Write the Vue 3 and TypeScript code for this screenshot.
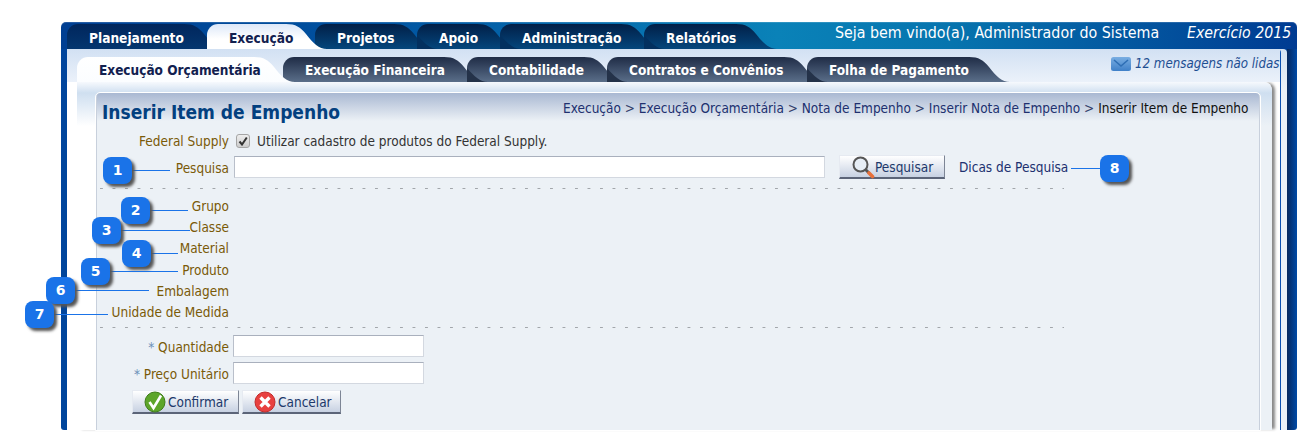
<script setup lang="ts">
interface Tab { label: string; width: number; gap: number; active?: boolean }
interface Callout { n: number; x: number; y: number; from: number; to: number; line: number }

const mainTabs: Tab[] = [
  { label: 'Planejamento', width: 118, gap: 22 },
  { label: 'Execução', width: 80, gap: 28, active: true },
  { label: 'Projetos', width: 80, gap: 22 },
  { label: 'Apoio', width: 61, gap: 22 },
  { label: 'Administração', width: 122, gap: 22 },
  { label: 'Relatórios', width: 93, gap: 22 }
]
const subTabs: Tab[] = [
  { label: 'Execução Orçamentária', width: 178, gap: 28, active: true },
  { label: 'Execução Financeira', width: 162, gap: 22 },
  { label: 'Contabilidade', width: 118, gap: 22 },
  { label: 'Contratos e Convênios', width: 178, gap: 22 },
  { label: 'Folha de Pagamento', width: 163, gap: 22 }
]
const crumbs = ['Execução', 'Execução Orçamentária', 'Nota de Empenho', 'Inserir Nota de Empenho']
const plainLabels = ['Grupo', 'Classe', 'Material', 'Produto', 'Embalagem', 'Unidade de Medida']
const callouts: Callout[] = [
  { n: 1, x: 103, y: 157, from: 132, to: 170, line: 170 },
  { n: 2, x: 121, y: 197, from: 150, to: 188, line: 210 },
  { n: 3, x: 92, y: 217, from: 121, to: 190, line: 230 },
  { n: 4, x: 122, y: 240, from: 150, to: 178, line: 253 },
  { n: 5, x: 81, y: 258, from: 110, to: 178, line: 271 },
  { n: 6, x: 46, y: 277, from: 75, to: 149, line: 290 },
  { n: 7, x: 25, y: 301, from: 53, to: 108, line: 314 },
  { n: 8, x: 1100, y: 155, from: 1071, to: 1100, line: 168 }
]
</script>

<template>
  <div class="page">
    <div class="frame">
      <header class="top">
        <nav class="tabs main">
          <div
            v-for="t in mainTabs"
            :key="t.label"
            class="tab"
            :class="{ active: t.active }"
            :style="{ width: t.width + 'px', marginRight: t.gap + 'px' }"
          >{{ t.label }}</div>
        </nav>
        <div class="welcome">Seja bem vindo(a), Administrador do Sistema</div>
        <div class="year">Exercício 2015</div>
      </header>
      <div class="shell">
        <div class="inner">
          <div class="subrow">
            <nav class="tabs sub">
              <div
                v-for="t in subTabs"
                :key="t.label"
                class="tab"
                :class="{ active: t.active }"
                :style="{ width: t.width + 'px', marginRight: t.gap + 'px' }"
              >{{ t.label }}</div>
            </nav>
            <div class="msgs">
              <svg class="env" width="20" height="14" viewBox="0 0 20 14">
                <defs>
                  <linearGradient id="envfill" x1="0" y1="0" x2="0" y2="1">
                    <stop offset="0" stop-color="#7aaee2" />
                    <stop offset="1" stop-color="#3f80c8" />
                  </linearGradient>
                </defs>
                <rect width="20" height="14" rx="2.5" fill="url(#envfill)" />
                <path d="M3 3 L10 9 L17 3" fill="none" stroke="#2f6fb5" stroke-width="1.6" />
              </svg>
              <span>12 mensagens não lidas</span>
            </div>
          </div>
          <div class="panel">
            <main class="box">
              <div class="titlebar">
                <h1>Inserir Item de Empenho</h1>
                <div class="crumbs">
                  <template v-for="c in crumbs" :key="c"><a>{{ c }}</a> &gt; </template>
                  <span class="cur">Inserir Item de Empenho</span>
                </div>
              </div>

              <div class="row fed">
                <label>Federal Supply</label>
                <div class="check">
                  <span class="cb">
                    <svg width="10" height="10" viewBox="0 0 10 10"><path d="M1.5 5.5 L4 8.5 L8.8 1.5" fill="none" stroke="#333" stroke-width="2" /></svg>
                  </span>
                  <span>Utilizar cadastro de produtos do Federal Supply.</span>
                </div>
              </div>

              <div class="row search">
                <label>Pesquisa</label>
                <div class="searchline">
                  <input class="inp wide" type="text" />
                  <button class="btn pesq">
                    <svg width="24" height="24" viewBox="0 0 24 24">
                      <line x1="14" y1="14" x2="18" y2="18" stroke="#555" stroke-width="3" />
                      <line x1="18" y1="18" x2="21.5" y2="21.5" stroke="#e8703a" stroke-width="3.6" stroke-linecap="round" />
                      <circle cx="9.5" cy="9.5" r="7" fill="#e6edf5" stroke="#555" stroke-width="2" />
                    </svg>
                    Pesquisar
                  </button>
                  <a class="tips">Dicas de Pesquisa</a>
                </div>
              </div>

              <div class="dots first"></div>

              <div class="plain">
                <div v-for="l in plainLabels" :key="l" class="row tight"><label>{{ l }}</label></div>
              </div>

              <div class="dots second"></div>

              <div class="row field">
                <label><em>*</em> Quantidade</label>
                <input class="inp short" type="text" />
              </div>
              <div class="row field gap">
                <label><em>*</em> Preço Unitário</label>
                <input class="inp short" type="text" />
              </div>

              <div class="actions">
                <button class="btn ok">
                  <svg width="22" height="22" viewBox="0 0 22 22">
                    <circle cx="11" cy="11" r="10" fill="#5da52a" stroke="#3f7d1a" />
                    <path d="M5.5 11 L9.5 17 L17 4.5" fill="none" stroke="#fff" stroke-width="2.6" />
                  </svg>
                  Confirmar
                </button>
                <button class="btn no">
                  <svg width="22" height="22" viewBox="0 0 22 22">
                    <circle cx="11" cy="11" r="10" fill="#e8403f" stroke="#c22b2b" />
                    <path d="M6.5 6.5 L15.5 15.5 M15.5 6.5 L6.5 15.5" stroke="#fff" stroke-width="3.4" />
                  </svg>
                  Cancelar
                </button>
              </div>
            </main>
          </div>
        </div>
      </div>
    </div>

    <template v-for="c in callouts" :key="c.n">
      <div class="cline" :style="{ left: c.from + 'px', top: c.line + 'px', width: c.to - c.from + 'px' }"></div>
      <div class="badge" :style="{ left: c.x + 'px', top: c.y + 'px' }">{{ c.n }}</div>
    </template>
  </div>
</template>

<style scoped>
.page {
  position: relative;
  width: 1311px;
  height: 440px;
  overflow: hidden;
  background: #fff;
  padding: 22px 0 0 61px;
  box-sizing: border-box;
  font-family: "DejaVu Sans", "Noto Sans", sans-serif;
  font-stretch: condensed;
  font-size: 13.5px;
}
.frame {
  width: 1236px;
  height: 408px;
  display: flex;
  flex-direction: column;
  border-radius: 5px 5px 3px 3px;
  background:
    linear-gradient(to right, #003f92 0, #0052a0 25%, #0a82b8 58%, #0674ae 72%, #003b92 100%) top / 100% 27px no-repeat,
    linear-gradient(to right, #00459c 0, #00459c 1226px, #06285e 1226px, #004aa6 1236px);
}
.top {
  height: 27px;
  flex: none;
  display: flex;
  padding-left: 6px;
  color: #fff;
  position: relative;
  box-shadow: inset 0 1px rgba(255, 255, 255, 0.15);
  border-radius: 5px 5px 0 0;
}
.tabs { display: flex; }
.main { padding-top: 2px; }
.tab {
  position: relative;
  z-index: 0;
  flex: none;
  box-sizing: border-box;
  font-weight: bold;
  color: #fff;
  border-top-left-radius: 11px;
  white-space: nowrap;
  padding-left: 22px;
  height: 25px;
}
.tab::after {
  content: "";
  position: absolute;
  z-index: -1;
  top: 0;
  left: 100%;
  width: 41px;
  height: 25px;
  margin-left: -1px;
  background: inherit;
  clip-path: path("M0 0 C 10 0 14 3 20 10 C 27 19 33 25 41 25 L0 25 Z");
}
.tab::before {
  content: "";
  position: absolute;
  z-index: -1;
  top: 0;
  left: 0;
  width: 22px;
  height: 25px;
  clip-path: path("M0 11 C 7 19 13 25 21 25 L0 25 Z");
}
.main .tab {
  font-size: 13.6px;
  line-height: 28px;
  background: linear-gradient(#021f47, #04467c);
}
.main .tab::before { background: #03305f; }
.sub .tab::before { background: #243249; }
.tab:first-child::before,
.tab.active::before,
.tab.active + .tab::before { display: none; }
.main .tab:first-child { background: linear-gradient(#01265c, #04366f); }
.main .tab.active {
  color: #11204f;
  background: linear-gradient(#dde8f8, #fff 60%);
  z-index: 3;
}
.welcome {
  position: absolute;
  left: 774px;
  top: 0;
  line-height: 22px;
  font-size: 15.85px;
  white-space: nowrap;
}
.year {
  position: absolute;
  left: 1126px;
  top: 0;
  line-height: 22px;
  font-size: 15.7px;
  font-style: italic;
  white-space: nowrap;
}
.shell {
  margin: 0 10px 0 6px;
  height: 381px;
  padding-right: 6px;
  background: linear-gradient(#d6e3f3, #eaf0f7 40px);
  border-top-right-radius: 4px;
}
.inner {
  height: 381px;
  box-sizing: border-box;
  border-right: 1.5px solid #0a4fb0;
  background: #fff;
  display: flex;
  flex-direction: column;
  border-top-right-radius: 4px;
}
.subrow {
  height: 33px;
  flex: none;
  padding: 8px 0 0 10px;
  box-sizing: border-box;
  background: linear-gradient(#d2e1f3, #ebf1fa);
  display: flex;
  position: relative;
}
.sub .tab {
  font-size: 13.5px;
  line-height: 26px;
  background: linear-gradient(#1f2c46, #5a6e89);
}
.sub .tab.active {
  color: #11204f;
  background: linear-gradient(#fff, #fbfdff);
  z-index: 3;
}
.msgs {
  position: absolute;
  left: 1044px;
  top: 7px;
  width: 169px;
  overflow: hidden;
  display: flex;
  align-items: center;
  gap: 4px;
  color: #1d4e92;
  font-style: italic;
  font-size: 13.2px;
  white-space: nowrap;
  line-height: 16px;
}
.env { flex: none; }
.panel {
  flex: 1;
  margin: 0 8.5px 0 10px;
  padding: 11px 12px 0 19px;
  background:
    linear-gradient(#f6f9fd, #cfdff0 11px, rgba(207, 223, 240, 0) 44px),
    linear-gradient(to right, #fff 19px, #ecf1f6 19px);
  border-top-right-radius: 8px;
  box-shadow: 4px 0 3px -1px #888;
  display: flex;
}
.box {
  flex: 1;
  border-left: 1px solid #c8d0dc;
  border-right: 1px solid #c8d0dc;
  outline: 1px solid #fff;
  border-radius: 4px 4px 0 0;
  background: linear-gradient(#a9b8d2, #ecf1f6 28px);
  color: #7a5a08;
}
.titlebar {
  height: 36px;
  position: relative;
}
h1 {
  position: absolute;
  left: 5px;
  top: 7px;
  margin: 0;
  font-size: 19px;
  line-height: 24px;
  font-weight: bold;
  color: #03407f;
  white-space: nowrap;
}
.crumbs {
  position: absolute;
  right: 10px;
  top: 5px;
  line-height: 20px;
  color: #33416b;
  white-space: nowrap;
}
.crumbs a { color: #20306f; }
.cur { color: #111; }
.row {
  display: grid;
  grid-template-columns: 132px 1fr;
  column-gap: 4px;
  align-items: center;
}
.row label { text-align: right; white-space: nowrap; }
.row em { font-style: normal; color: #6b8fb8; }
.fed { height: 24px; }
.check { display: flex; align-items: center; gap: 7px; padding-left: 3px; color: #333; }
.cb {
  width: 12px;
  height: 12px;
  border: 1px solid #a5a5a5;
  border-radius: 3px;
  background: linear-gradient(#eee, #ccc);
  display: flex;
  align-items: center;
  justify-content: center;
}
.search { height: 24px; margin-top: 2px; }
.search label { padding-top: 1px; }
.searchline { display: flex; align-items: center; padding-left: 1px; }
.inp {
  box-sizing: border-box;
  height: 22px;
  padding: 0;
  background: #fff;
  border: 1px solid #d3d8e0;
  border-top-color: #a9b0bd;
  border-left-color: #b9bfca;
  outline: none;
}
.wide { width: 591px; }
.short { width: 191px; }
.btn {
  box-sizing: border-box;
  height: 24px;
  display: flex;
  align-items: center;
  gap: 2px;
  padding: 0 0 0 11px;
  font: inherit;
  color: #20386a;
  background: linear-gradient(#fff, #c7d1e2);
  border: 1px solid #e6eaf1;
  border-bottom: 2px solid #5b6478;
  border-right-color: #7d8595;
}
.pesq { width: 106px; margin-left: 14px; gap: 0; }
.tips { margin-left: 14px; color: #20306f; }
.dots {
  margin-left: 3px;
  width: 964px;
  height: 1px;
  background: linear-gradient(to right, #a2a6ab 3px, transparent 3px) 0 0 / 12.5px 1px repeat-x;
}
.first { margin-top: 9px; }
.plain { margin-top: 6.5px; }
.tight { height: 21.2px; }
.second { margin-top: 4.4px; }
.field { height: 22px; margin-top: 7px; }
.field label { padding-top: 2px; }
.field.gap { margin-top: 5px; }
.actions { display: flex; gap: 3px; margin: 6px 0 0 35px; }
.ok { width: 107px; }
.no { width: 99px; }
.cline {
  position: absolute;
  height: 1px;
  background: #1a73e8;
}
.badge {
  position: absolute;
  width: 29px;
  height: 27px;
  border-radius: 8px;
  background: #1a73e8;
  box-shadow: 3px 3px 3px #555;
  color: #fff;
  font-family: "DejaVu Sans", sans-serif;
  font-stretch: normal;
  font-weight: bold;
  font-size: 14px;
  line-height: 27px;
  text-align: center;
}
</style>
